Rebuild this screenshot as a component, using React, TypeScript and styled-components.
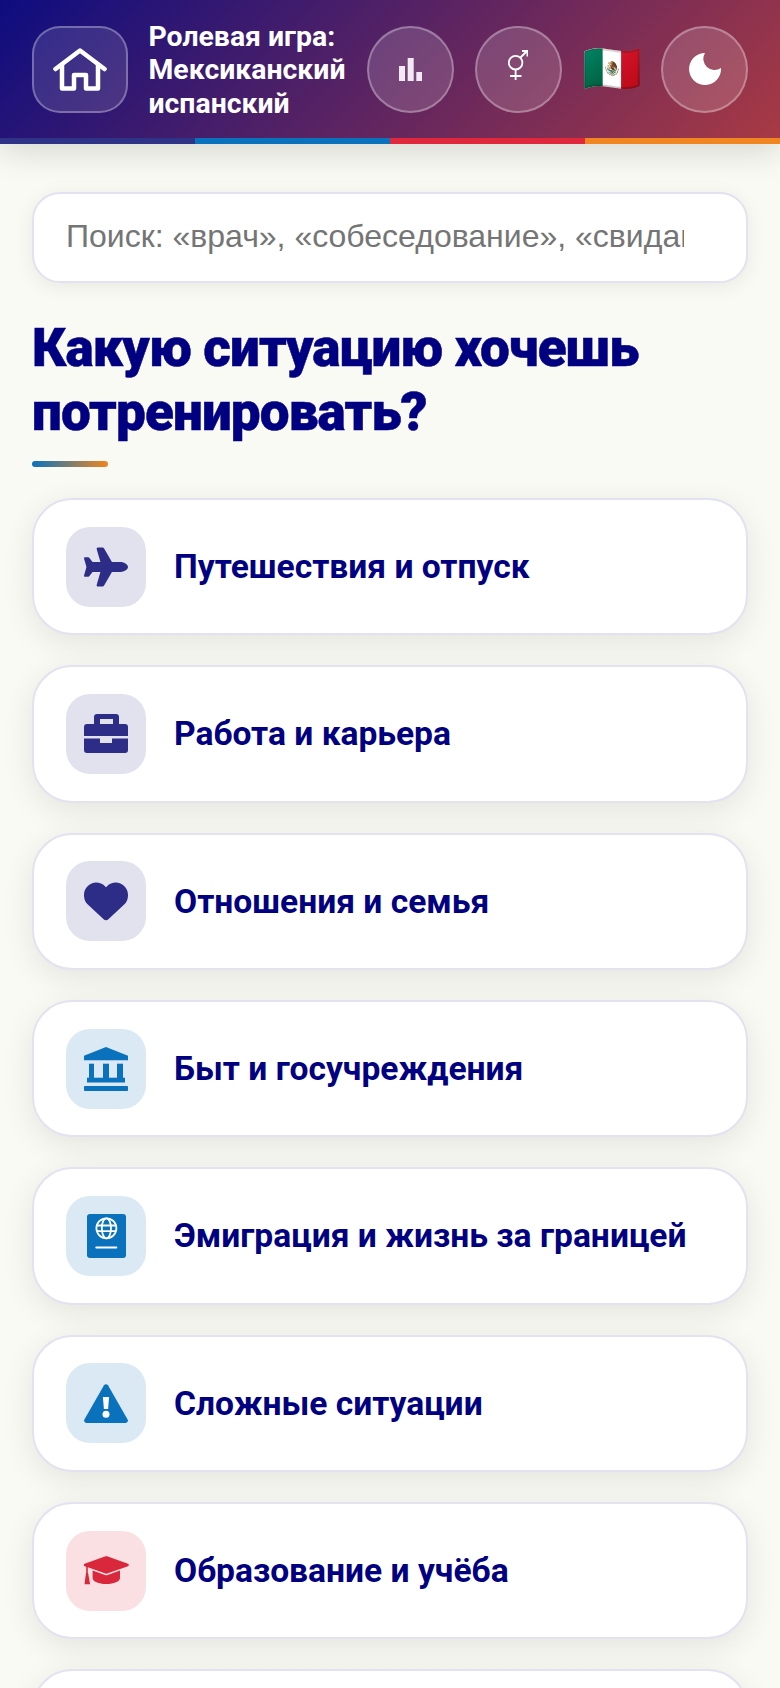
import React from 'react';
import styled, { createGlobalStyle } from 'styled-components';
import { FaPlane, FaHeart } from 'react-icons/fa6';

const GlobalStyle = createGlobalStyle`
  html, body {
    margin: 0;
    height: 1688px;
    overflow: hidden;
    background: #fafaf5;
    font-family: Roboto, "Liberation Sans", sans-serif;
  }
  * { box-sizing: border-box; }
`;

const Header = styled.header`
  position: relative;
  z-index: 2;
  box-shadow: 0 8px 32px rgba(0, 0, 0, 0.14);
`;

const Toolbar = styled.div`
  display: flex;
  align-items: center;
  gap: 20.5px;
  height: 138px;
  padding: 0 32px;
  background: linear-gradient(135deg, #0d0d80 0%, #a83a44 100%);
`;

const HomeButton = styled.button`
  flex: none;
  display: flex;
  align-items: center;
  justify-content: center;
  width: 96px;
  height: 87px;
  padding: 0;
  border: 2px solid rgba(255, 255, 255, 0.3);
  border-radius: 28px;
  background: rgba(255, 255, 255, 0.12);
`;

const Title = styled.h1`
  flex: 1;
  min-width: 0;
  margin: 2px 0 0;
  color: #fff;
  font-size: 28.4px;
  font-weight: 700;
  line-height: 33.2px;
`;

const RoundButton = styled.button`
  flex: none;
  display: flex;
  align-items: center;
  justify-content: center;
  width: 87px;
  height: 87px;
  padding: 0;
  border: 2px solid rgba(255, 255, 255, 0.3);
  border-radius: 50%;
  background: rgba(255, 255, 255, 0.15);
  color: #fff;
`;

const GenderIcon = styled.svg`
  margin-bottom: 9px;
`;

const Flag = styled.div`
  flex: none;
  width: 58.5px;
  font-size: 48px;
  line-height: 1;
  text-align: center;
  font-family: "Noto Color Emoji", sans-serif;
`;

const Stripe = styled.div`
  display: grid;
  grid-template-columns: repeat(4, 1fr);
  height: 6px;
`;

const StripePart = styled.div<{ $color: string }>`
  background: ${(p) => p.$color};
`;

const Main = styled.main`
  padding: 48px 32px 0;
`;

const SearchInput = styled.input`
  display: block;
  width: 100%;
  height: 91px;
  padding: 0 62px 3px 32px;
  border: 2px solid #e2e2f0;
  border-radius: 28px;
  background: #fff;
  box-shadow: 0 4px 20px rgba(0, 0, 0, 0.07);
  color: #222;
  font-family: "Liberation Sans", sans-serif;
  font-size: 32px;
  outline: none;
  &::placeholder {
    color: #757575;
    opacity: 1;
  }
`;

const Heading = styled.h2`
  margin: 33px 0 0;
  color: #000080;
  font-size: 53px;
  font-weight: 900;
  line-height: 64px;
  letter-spacing: -0.85px;
  -webkit-text-stroke: 0.5px #000080;
`;

const Underline = styled.div`
  width: 76px;
  height: 6px;
  margin-top: 17px;
  border-radius: 3px;
  background: linear-gradient(90deg, #0a72bd, #f08522);
`;

const CardList = styled.div`
  display: flex;
  flex-direction: column;
  gap: 30px;
  margin-top: 31px;
`;

const Card = styled.div`
  flex: none;
  display: flex;
  align-items: center;
  gap: 28px;
  height: 137.33px;
  padding: 0 32px;
  border: 2px solid #e2e2f0;
  border-radius: 40px;
  background: #fff;
  box-shadow: 0 8px 32px rgba(0, 0, 0, 0.09);
`;

type Tone = 'navy' | 'blue' | 'red';

const tones: Record<Tone, { fg: string; bg: string }> = {
  navy: { fg: '#2d2d87', bg: '#e2e2ee' },
  blue: { fg: '#0a72bd', bg: '#dbe9f5' },
  red: { fg: '#d9273c', bg: '#fadfe3' },
};

const IconBox = styled.div<{ $tone: Tone }>`
  flex: none;
  display: flex;
  align-items: center;
  justify-content: center;
  width: 80px;
  height: 80px;
  border-radius: 24px;
  font-size: 44px;
  color: ${(p) => tones[p.$tone].fg};
  background: ${(p) => tones[p.$tone].bg};
`;

const CardLabel = styled.span`
  color: #000080;
  font-size: 33.6px;
  font-weight: 700;
`;

const BriefcaseIcon = () => (
  <svg width="44" height="39" viewBox="0 0 44 39" fill="currentColor">
    <path
      fillRule="evenodd"
      d="M13 0h19a3 3 0 0 1 3 3v7h6a3 3 0 0 1 3 3v9H0v-9a3 3 0 0 1 3-3h7V3a3 3 0 0 1 3-3Zm3 5v5h13V5H16Z"
    />
    <path d="M0 24.5h16V29h12v-4.5h16V36a3 3 0 0 1-3 3H3a3 3 0 0 1-3-3V24.5Z" />
  </svg>
);

const LandmarkIcon = () => (
  <svg width="44" height="44" viewBox="0 0 44 44" fill="currentColor">
    <path d="M22 0 44 8.7v4.6H0V8.7L22 0Z" />
    <rect x="5" y="16.7" width="5" height="15" />
    <rect x="19" y="16.7" width="6" height="15" />
    <rect x="33" y="16.7" width="6" height="15" />
    <rect x="3" y="30.7" width="38" height="4.8" />
    <rect y="39" width="44" height="5" rx="0.8" />
  </svg>
);

const PassportIcon = () => (
  <svg width="39" height="44" viewBox="0 0 39 44">
    <rect width="39" height="44" rx="3" fill="currentColor" />
    <g fill="none" stroke="#fff" strokeWidth="1.8">
      <circle cx="19.4" cy="14.3" r="10" />
      <ellipse cx="19.4" cy="14.3" rx="4.6" ry="10" />
      <path d="M10 11.5h18.8M10 17.1h18.8" />
    </g>
    <rect x="8.3" y="32.4" width="22" height="2" rx="1" fill="#fff" />
  </svg>
);

const WarningIcon = () => (
  <svg width="44" height="39" viewBox="0 0 44 39">
    <path
      d="M20 1.2a2.4 2.4 0 0 1 4 0l19.6 34.4a2.3 2.3 0 0 1-2 3.4H2.4a2.3 2.3 0 0 1-2-3.4L20 1.2Z"
      fill="currentColor"
    />
    <path d="M18.9 13h6.2l-1 12h-4.2l-1-12Z" fill="#fff" />
    <circle cx="22" cy="30.3" r="3.5" fill="#fff" />
  </svg>
);

const CapIcon = () => (
  <svg width="45" height="29" viewBox="0 0 45 29" fill="currentColor">
    <path d="M21.5.3a2.5 2.5 0 0 1 1.6 0L44 7.8a1.3 1.3 0 0 1 0 2.4L23.1 17.5a2.5 2.5 0 0 1-1.6 0L3.8 11.3V17H2.2v-6.3L.6 10.2a1.3 1.3 0 0 1 0-2.4L21.5.3Z" />
    <path d="M8.6 14.5 21 19a4 4 0 0 0 2.6 0L36 14.5V22c0 3.6-6 6-13.7 6S8.6 25.6 8.6 22v-7.5Z" />
    <path d="M2 17h2.1l2 11.3H.5L2 17Z" />
  </svg>
);

const topics: { label: string; tone: Tone; icon: React.ReactNode }[] = [
  { label: 'Путешествия и отпуск', tone: 'navy', icon: <FaPlane /> },
  { label: 'Работа и карьера', tone: 'navy', icon: <BriefcaseIcon /> },
  { label: 'Отношения и семья', tone: 'navy', icon: <FaHeart /> },
  { label: 'Быт и госучреждения', tone: 'blue', icon: <LandmarkIcon /> },
  { label: 'Эмиграция и жизнь за границей', tone: 'blue', icon: <PassportIcon /> },
  { label: 'Сложные ситуации', tone: 'blue', icon: <WarningIcon /> },
  { label: 'Образование и учёба', tone: 'red', icon: <CapIcon /> },
];

function App() {
  return (
    <>
      <GlobalStyle />
      <Header>
        <Toolbar>
          <HomeButton aria-label="Домой">
            <svg width="54" height="43" viewBox="0 0 54 43" fill="none" stroke="#fff" strokeWidth="4.5" strokeLinejoin="round" strokeLinecap="round">
              <path d="M2.5 21 27 2.5 51.5 21" />
              <path d="M9 17v23.5h12V27h12v13.5h12V17" />
            </svg>
          </HomeButton>
          <Title>Ролевая игра: Мексиканский испанский</Title>
          <RoundButton aria-label="Статистика">
            <svg width="23" height="23" viewBox="0 0 23 23" fill="#f3e9f5">
              <rect x="0" y="8" width="6" height="15" />
              <rect x="8.7" y="0" width="6" height="23" />
              <rect x="17.3" y="14" width="5.7" height="9" />
            </svg>
          </RoundButton>
          <RoundButton aria-label="Пол">
            <GenderIcon width="20" height="30" viewBox="0 0 20 30" fill="none" stroke="#fff" strokeWidth="1.8">
              <circle cx="7.6" cy="12.7" r="6.8" />
              <path d="M12.5 7.5 19 1M14 1h5.4v5.4M7.6 19.5V30M2 26h11.5" />
            </GenderIcon>
          </RoundButton>
          <Flag>🇲🇽</Flag>
          <RoundButton aria-label="Тема">
            <svg width="32" height="32" viewBox="0 0 32 32" fill="#fff">
              <path d="M16 0A16 16 0 1 0 32 15 11.2 11.2 0 0 1 16 0Z" />
            </svg>
          </RoundButton>
        </Toolbar>
        <Stripe>
          <StripePart $color="#2e3388" />
          <StripePart $color="#0a72bd" />
          <StripePart $color="#e0283c" />
          <StripePart $color="#f08522" />
        </Stripe>
      </Header>
      <Main>
        <SearchInput placeholder="Поиск: «врач», «собеседование», «свидание»" />
        <Heading>Какую ситуацию хочешь потренировать?</Heading>
        <Underline />
        <CardList>
          {topics.map((t) => (
            <Card key={t.label}>
              <IconBox $tone={t.tone}>{t.icon}</IconBox>
              <CardLabel>{t.label}</CardLabel>
            </Card>
          ))}
          <Card />
        </CardList>
      </Main>
    </>
  );
}

export default App;
